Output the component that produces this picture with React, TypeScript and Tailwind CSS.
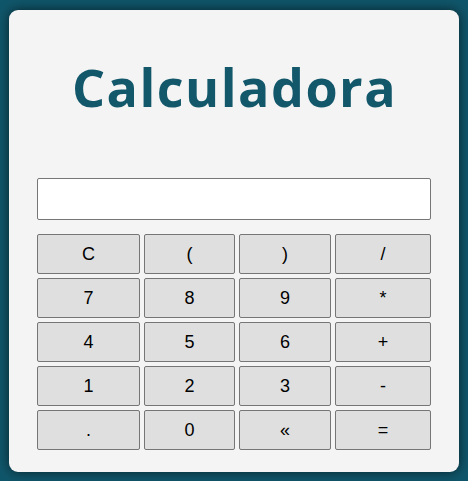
import React from "react";

const keys = ["C", "(", ")", "/", "7", "8", "9", "*", "4", "5", "6", "+", "1", "2", "3", "-", ".", "0", "«", "="];

export default function App() {
  return (
    <div className="min-h-screen bg-[#10566a] pt-[10px] pl-[9px]">
      {/* cartão da calculadora */}
      <div className="w-[450px] h-[462px] rounded-[9px] bg-[#f4f4f4] px-[28px] pt-[52px] shadow-[0_0_12px_rgba(0,0,0,0.6)]">
        <h1
          className="text-center text-[52px] leading-[50px] font-bold tracking-[1.5px] pl-[1px] text-[#12576a]"
          style={{ fontFamily: '"Open Sans", sans-serif' }}
        >
          Calculadora
        </h1>
        <input
          type="text"
          className="mt-[66px] block w-[394px] h-[42px] bg-white border border-[#767676] rounded-[2px] outline-none"
        />
        <div className="mt-[14px] grid grid-cols-[103px_91px_92px_96px] gap-[4px]">
          {keys.map((k) => (
            <button
              key={k}
              className="h-[40px] bg-[#dfdfdf] border border-[#767676] rounded-[2px] text-[18px] text-black"
              style={{ fontFamily: '"Liberation Sans", Arial, sans-serif' }}
            >
              {k}
            </button>
          ))}
        </div>
      </div>
    </div>
  );
}
